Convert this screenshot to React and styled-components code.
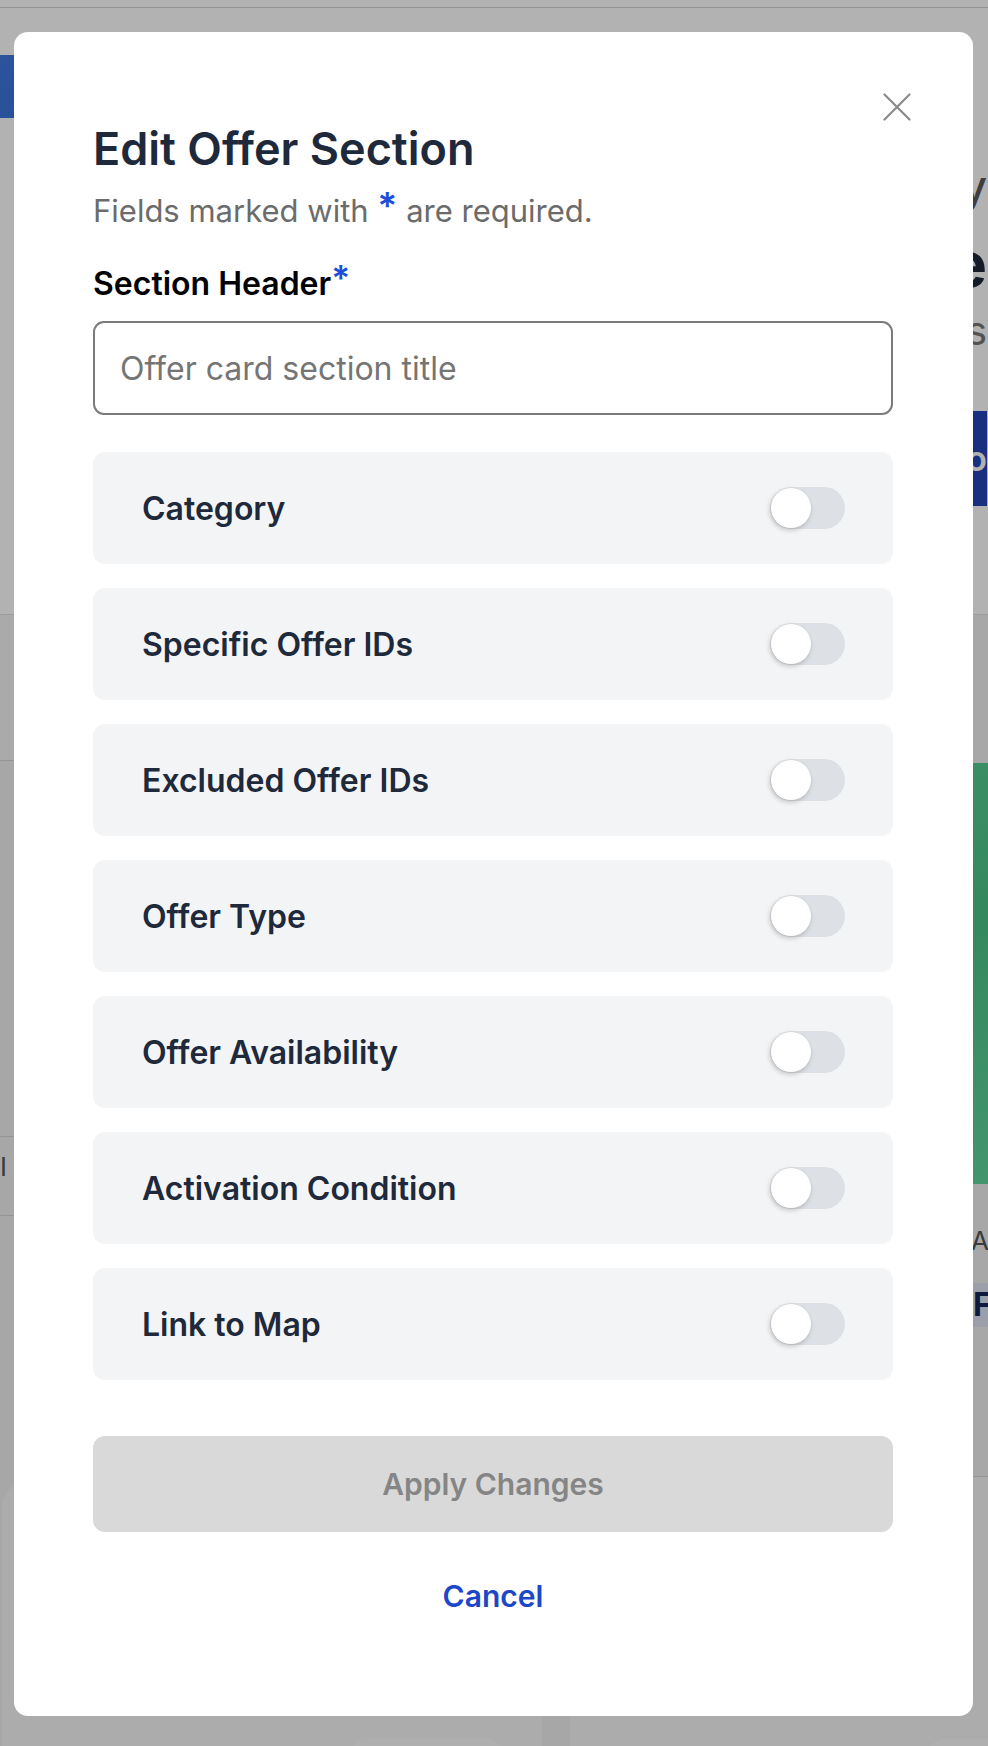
import React from "react";
import styled, { createGlobalStyle } from "styled-components";

const GlobalStyle = createGlobalStyle`
  * { box-sizing: border-box; }
  body {
    margin: 0;
    font-family: Inter, "Noto Sans", Arial, sans-serif;
    background: #f0f0f0;
  }
`;

/* ---------- page behind the dialog ---------- */

const Page = styled.div`
  position: relative;
  height: 1746px;
  overflow: hidden;
  background: #f0f0f0;
`;

const TopBar = styled.div`
  height: 8px;
  background: #fff;
  border-bottom: 1px solid #d4d4d4;
`;

const Hero = styled.section`
  display: grid;
  grid-template-columns: 542px 1fr;
  column-gap: 28px;
  height: 607px;
  background: #fff;
  border-bottom: 1px solid #e0e0e0;
`;

const HeroMedia = styled.div`
  padding-top: 47px;
`;

const BlueImage = styled.div`
  height: 63px;
  width: 420px;
  background: linear-gradient(120deg, #3f79e0, #2c5fc4 60%, #3a6fd6);
`;

const HeroText = styled.div`
  padding-top: 150px;
  padding-right: 1px;
  text-align: right;
  white-space: nowrap;
  overflow: hidden;
`;

const Eyebrow = styled.div`
  font-size: 44px;
  line-height: 56px;
  color: #5a5a5a;
  font-weight: 500;
`;

const HeroTitle = styled.div`
  margin-top: 12px;
  font-size: 64px;
  line-height: 76px;
  font-weight: 700;
  color: #1e293b;
`;

const HeroSub = styled.div`
  margin-top: 4px;
  font-size: 40px;
  line-height: 50px;
  color: #777;
`;

const HeroButton = styled.div`
  margin-top: 55px;
  height: 95px;
  background: #2446b8;
  color: #fff;
  font-size: 34px;
  font-weight: 600;
  line-height: 95px;
`;

const Lower = styled.section`
  display: grid;
  grid-template-columns: 542px 1fr;
  column-gap: 28px;
`;

const Column = styled.div`
  display: flex;
  flex-direction: column;
`;

const Band = styled.div`
  height: ${p => p.h}px;
  background: ${p => p.bg || "transparent"};
  border-bottom: ${p => (p.line ? "1px solid #d6d6d6" : "none")};
`;

const SmallText = styled.div`
  height: ${p => p.h}px;
  padding: ${p => p.pt || 0}px 0 0 ${p => p.pl || 0}px;
  font-size: 26px;
  color: #555;
  white-space: nowrap;
  overflow: hidden;
  border-bottom: ${p => (p.line ? "1px solid #d6d6d6" : "none")};
`;

const Green = styled.div`
  margin-top: 148px;
  height: 421px;
  background: linear-gradient(160deg, #5fd49a, #4cc487 50%, #62d9a0);
`;

const Chip = styled.div`
  margin-top: 12px;
  height: 44px;
  background: #dde4f4;
  color: #15245a;
  font-size: 32px;
  font-weight: 700;
  line-height: 44px;
  padding-left: 403px;
`;

const Card = styled.div`
  margin-left: ${p => p.inset}px;
  height: 300px;
  border-radius: 28px;
  background: #f6f6f6;
  padding: ${p => p.pad}px 0 0 ${p => p.pill}px;
`;

const Pill = styled.div`
  width: 154px;
  height: 40px;
  border-radius: 20px;
  background: #fbfbfb;
`;

/* ---------- dialog ---------- */

const Overlay = styled.div`
  position: absolute;
  inset: 0;
  background: rgba(0, 0, 0, 0.3);
  padding: 32px 15px 0 14px;
`;

const Modal = styled.div`
  position: relative;
  width: 959px;
  height: 1684px;
  background: #fff;
  border-radius: 14px;
  padding: 91px 80px 0 79px;
  display: flex;
  flex-direction: column;
`;

const CloseButton = styled.button`
  position: absolute;
  top: 61px;
  right: 62px;
  width: 28px;
  height: 28px;
  padding: 0;
  border: none;
  background: none;
  display: flex;
`;

const Title = styled.h2`
  margin: 0;
  font-size: 45px;
  line-height: 52px;
  font-weight: 600;
  color: #1e293b;
`;

const Hint = styled.p`
  margin: 17px 0 0;
  font-size: 31px;
  line-height: 38px;
  color: #6b6b6b;
`;

const Star = styled.span`
  color: #1d4ed8;
  font-weight: 600;
  font-size: ${p => (p.raised ? "1.1em" : "1.2em")};
  line-height: 0;
  vertical-align: ${p => (p.raised ? "4px" : "3px")};
`;

const Label = styled.label`
  margin-top: 34px;
  font-size: 32px;
  line-height: 40px;
  font-weight: 600;
  color: #000;
`;

const Input = styled.input`
  margin-top: 17px;
  height: 94px;
  width: 100%;
  border: 2px solid #7b7b7b;
  border-radius: 11px;
  padding: 0 25px;
  font-family: inherit;
  font-size: 32px;
  color: #1e293b;
  outline: none;

  &::placeholder {
    color: #757575;
  }
`;

const Options = styled.div`
  margin-top: 37px;
  display: flex;
  flex-direction: column;
  gap: 24px;
`;

const OptionRow = styled.div`
  height: 112px;
  background: #f3f4f6;
  border-radius: 12px;
  padding: 0 48px 0 49px;
  display: flex;
  align-items: center;
  justify-content: space-between;
`;

const OptionLabel = styled.span`
  font-size: 32px;
  font-weight: 600;
  color: #1e293b;
`;

const Track = styled.span`
  width: 75px;
  height: 42px;
  border-radius: 21px;
  background: ${p => (p.$on ? "#1d4ed8" : "#dde0e5")};
  display: flex;
  align-items: center;
  justify-content: ${p => (p.$on ? "flex-end" : "flex-start")};
  padding: 0 1px;
`;

const Knob = styled.span`
  width: 40px;
  height: 40px;
  border-radius: 50%;
  background: #fff;
  box-shadow: -1px 2px 5px rgba(0, 0, 0, 0.22);
`;

const ApplyButton = styled.button`
  margin-top: 56px;
  height: 96px;
  border: none;
  border-radius: 12px;
  background: #d9d9d9;
  color: #858585;
  font-family: inherit;
  font-size: 30px;
  font-weight: 600;
`;

const CancelButton = styled.button`
  margin-top: 16px;
  height: 96px;
  border: none;
  background: none;
  color: #1d47c9;
  font-family: inherit;
  font-size: 30px;
  font-weight: 600;
`;

const OPTIONS = [
  "Category",
  "Specific Offer IDs",
  "Excluded Offer IDs",
  "Offer Type",
  "Offer Availability",
  "Activation Condition",
  "Link to Map",
];

function Toggle({ on }) {
  return (
    <Track $on={on}>
      <Knob />
    </Track>
  );
}

export default function App() {
  return (
    <Page>
      <GlobalStyle />
      <TopBar />
      <Hero>
        <HeroMedia>
          <BlueImage />
        </HeroMedia>
        <HeroText>
          <Eyebrow>Daily</Eyebrow>
          <HeroTitle>Welcome</HeroTitle>
          <HeroSub>Offers</HeroSub>
          <HeroButton>Info</HeroButton>
        </HeroText>
      </Hero>
      <Lower>
        <Column>
          <Band h={146} bg="#f4f4f4" line />
          <Band h={376} line />
          <SmallText h={79} pt={14} line>
            I
          </SmallText>
          <Band h={264} />
          <Card inset={2} pad={258} pill={348}>
            <Pill />
          </Card>
        </Column>
        <Column>
          <Green />
          <SmallText h={87} pt={41} pl={401}>
            Au
          </SmallText>
          <Chip>F</Chip>
          <Band h={150} line />
          <Card inset={0} pad={262} pill={356}>
            <Pill />
          </Card>
        </Column>
      </Lower>

      <Overlay>
        <Modal role="dialog" aria-labelledby="edit-offer-title">
          <CloseButton aria-label="Close">
            <svg width="28" height="28" viewBox="0 0 28 28" fill="none">
              <path
                d="M1.5 1.5L26.5 26.5M26.5 1.5L1.5 26.5"
                stroke="#8a8a8a"
                strokeWidth="2.2"
                strokeLinecap="round"
              />
            </svg>
          </CloseButton>
          <Title id="edit-offer-title">Edit Offer Section</Title>
          <Hint>
            Fields marked with <Star>*</Star> are required.
          </Hint>
          <Label htmlFor="section-header">
            Section Header<Star raised>*</Star>
          </Label>
          <Input id="section-header" placeholder="Offer card section title" />
          <Options>
            {OPTIONS.map(name => (
              <OptionRow key={name}>
                <OptionLabel>{name}</OptionLabel>
                <Toggle on={false} />
              </OptionRow>
            ))}
          </Options>
          <ApplyButton disabled>Apply Changes</ApplyButton>
          <CancelButton>Cancel</CancelButton>
        </Modal>
      </Overlay>
    </Page>
  );
}
